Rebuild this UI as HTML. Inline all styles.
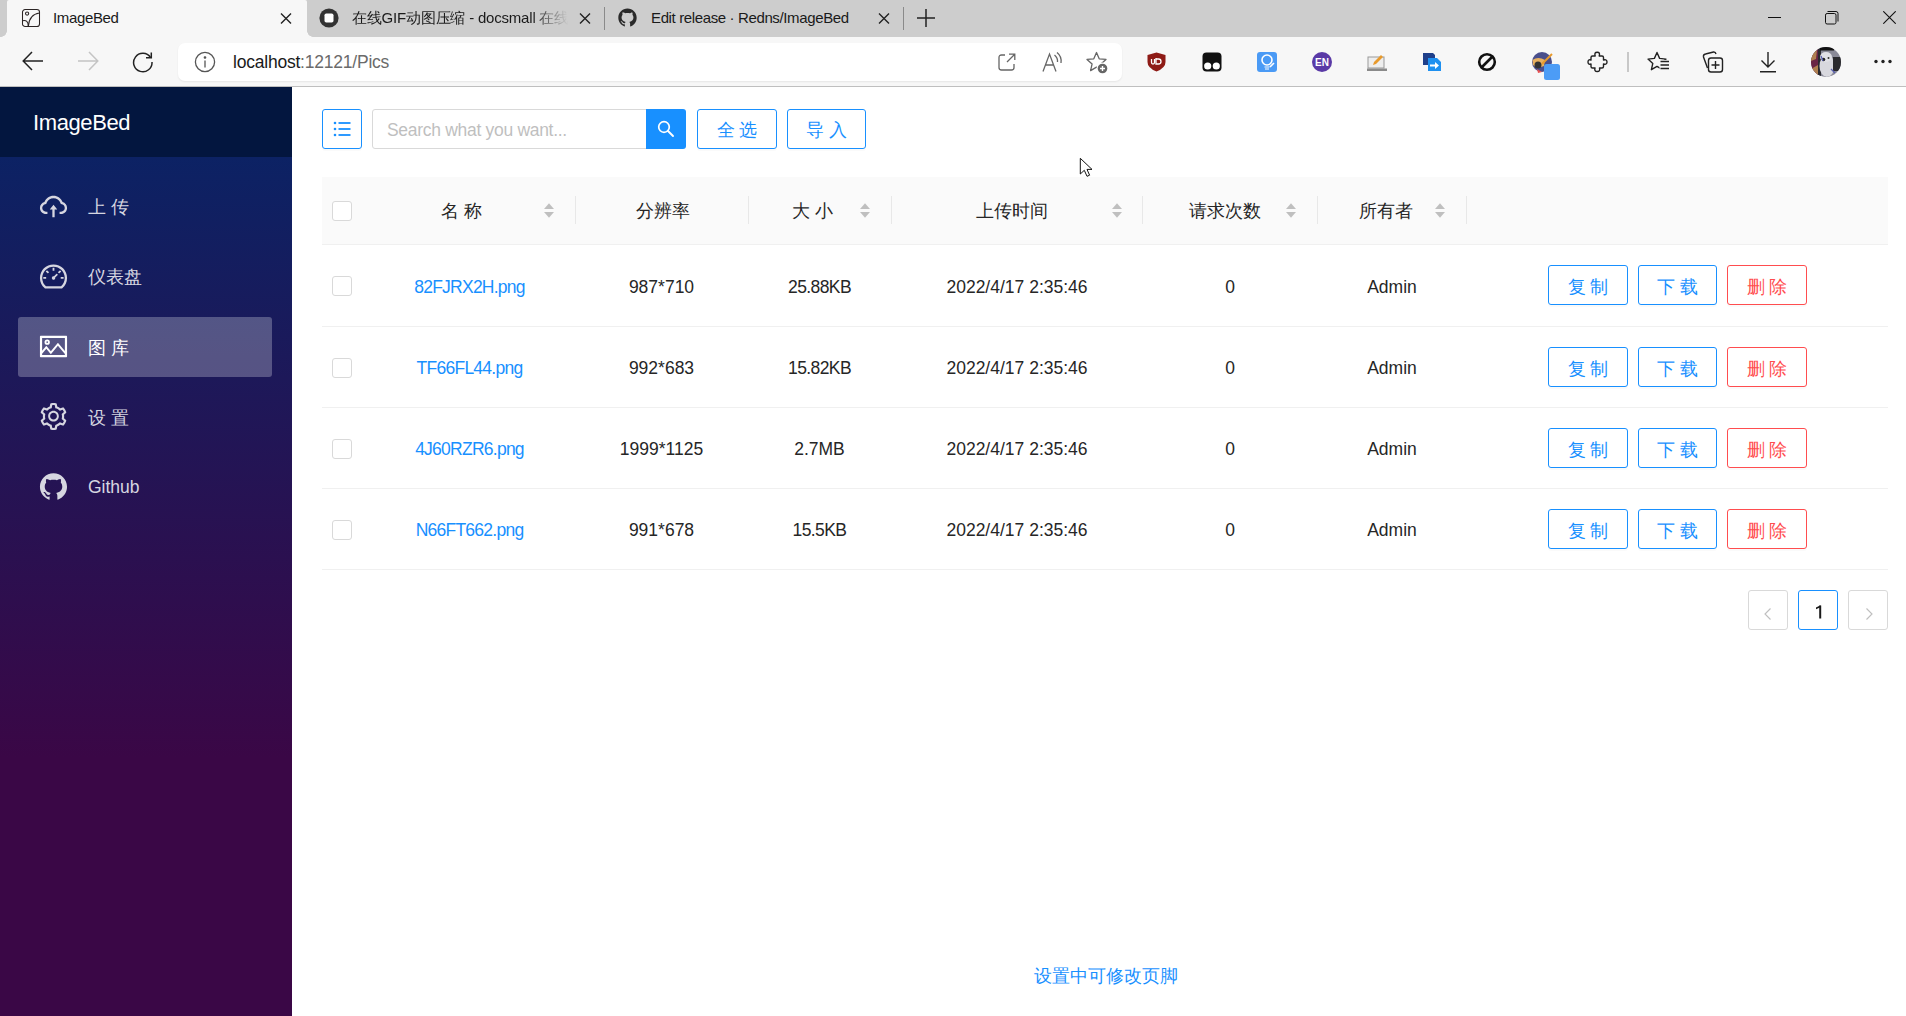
<!DOCTYPE html>
<html><head><meta charset="utf-8">
<style>
*{box-sizing:border-box;margin:0;padding:0}
html,body{width:1906px;height:1016px;overflow:hidden;background:#fff;font-family:"Liberation Sans",sans-serif;position:relative}
.abs{position:absolute}
/* chrome */
#tabstrip{position:absolute;left:0;top:0;width:1906px;height:37px;background:#cdcdcd}
#toolbar{position:absolute;left:0;top:37px;width:1906px;height:50px;background:#f7f7f7;border-bottom:1px solid #bfbfbf}
.tab-active{position:absolute;left:7px;top:0;width:300px;height:37px;background:#f7f7f7;border-radius:2px 2px 0 0}
.tabtxt{position:absolute;top:9px;font-size:15px;color:#1a1a1a;white-space:nowrap;line-height:18px}
.tsep{position:absolute;top:7px;width:1px;height:23px;background:#8a8a8a}
#addr{position:absolute;left:178px;top:43px;width:944px;height:38px;background:#fff;border-radius:7px;box-shadow:0 1px 2px rgba(0,0,0,0.07)}
/* page */
#side{position:absolute;left:0;top:157px;width:292px;height:859px;background:linear-gradient(#0c2264 0px,#3a0746 600px,#3a0746 100%)}
#sidehead{position:absolute;left:0;top:87px;width:292px;height:70px;background:#03163f}
#main{position:absolute;left:292px;top:87px;width:1614px;height:929px;background:#fff}
.menu{position:absolute;left:0;width:292px;height:60px;color:#d6d6e0;font-size:17.5px}
.menu .ic{position:absolute;left:39px;top:16px;width:28px;height:28px}
.menu .tx{position:absolute;left:88px;top:19px;line-height:22px;white-space:nowrap}
.btn{position:absolute;height:40px;border:1px solid #1890ff;border-radius:3px;box-shadow:0 2px 0 rgba(0,0,0,0.02);color:#1890ff;background:#fff;font-size:17.5px;text-align:center;line-height:40px;white-space:nowrap}
.btn.red{border-color:#ff4d4f;color:#ff4d4f}
.th{position:absolute;top:200px;font-size:17.5px;color:#262626;white-space:nowrap;line-height:22px}
.td{position:absolute;font-size:17.5px;color:#262626;white-space:nowrap;line-height:22px;text-align:center}
.link{color:#1890ff;letter-spacing:-0.75px}
.cb{position:absolute;width:20px;height:20px;border:1px solid #d9d9d9;border-radius:3px;background:#fff}
.vsep{position:absolute;top:196px;width:1px;height:28px;background:#e8e8e8}
.rowline{position:absolute;left:322px;width:1566px;height:1px;background:#f0f0f0}
.sorter{position:absolute;top:203px;width:10px;height:15px}
.pg{position:absolute;top:590px;width:40px;height:40px;border:1px solid #d9d9d9;border-radius:3px;background:#fff}
</style></head><body>
<!-- TAB STRIP -->
<div id="tabstrip"></div>
<div class="tab-active"></div>
<!-- concave bottom corners of active tab -->
<div class="abs" style="left:1px;top:31px;width:6px;height:6px;background:radial-gradient(circle at 0 0,#cdcdcd 5.5px,#f7f7f7 6px)"></div>
<div class="abs" style="left:307px;top:31px;width:6px;height:6px;background:radial-gradient(circle at 100% 0,#cdcdcd 5.5px,#f7f7f7 6px)"></div>
<!-- tab 1 -->
<svg class="abs" style="left:21px;top:8px" width="20" height="20" viewBox="0 0 20 20" fill="none" stroke="#2b2424" stroke-width="1.05"><rect x="1.5" y="1.5" width="17" height="17" rx="2.6"/><circle cx="6.1" cy="5.6" r="1.6"/><path d="M1.5 12.7 Q7.2 11.3 7.3 18.5"/><path d="M7.3 18.5 Q8.2 6.3 18.5 5.0"/></svg>
<div class="tabtxt" style="left:53px;letter-spacing:-0.35px">ImageBed</div>
<svg class="abs" style="left:280px;top:13px" width="12" height="11" viewBox="0 0 12 11" stroke="#222" stroke-width="1.4"><path d="M1 0.5 L11 10.5 M11 0.5 L1 10.5"/></svg>
<!-- tab 2 -->
<svg class="abs" style="left:319px;top:8px" width="20" height="20" viewBox="0 0 20 20"><circle cx="10" cy="10" r="9.6" fill="#333"/><rect x="5.5" y="5.5" width="9" height="9" rx="1.8" fill="#fff"/></svg>
<div class="tabtxt" style="left:352px;width:216px;overflow:hidden;letter-spacing:-0.2px;-webkit-mask-image:linear-gradient(90deg,#000 180px,transparent 216px)">在线GIF动图压缩 - docsmall 在线</div>
<svg class="abs" style="left:579px;top:13px" width="12" height="11" viewBox="0 0 12 11" stroke="#222" stroke-width="1.4"><path d="M1 0.5 L11 10.5 M11 0.5 L1 10.5"/></svg>
<div class="tsep" style="left:604px"></div>
<!-- tab 3 -->
<svg class="abs" style="left:617px;top:7px" width="21" height="21" viewBox="0 0 1024 1024" fill="#2a2a2a"><path d="M511.6 76.3C264.3 76.2 64 276.4 64 523.5 64 718.9 189.3 885 363.8 946c23.5 5.9 19.9-10.8 19.9-22.2v-77.5c-135.7 15.9-141.2-73.9-150.3-88.9C215 726 171.5 718 184.5 703c30.9-15.9 62.4 4 98.9 57.9 26.4 39.1 77.9 32.5 104 26 5.7-23.5 17.9-44.5 34.7-60.8-140.6-25.2-199.2-111-199.2-213 0-49.5 16.3-95 48.3-131.7-20.4-60.5 1.9-112.3 4.9-120 58.1-5.2 118.5 41.6 123.2 45.3 33-8.9 70.7-13.6 112.9-13.6 42.4 0 80.2 4.9 113.5 13.9 11.3-8.6 67.3-48.8 121.3-43.9 2.9 7.7 24.7 58.3 5.5 118 32.4 36.8 48.9 82.7 48.9 132.3 0 102.2-59 188.1-200 212.9a127.5 127.5 0 0138.1 91v112.5c.8 9 0 17.9 15 17.9 177.1-59.7 304.6-227 304.6-424.1 0-247.2-200.4-447.3-447.5-447.3z"/></svg>
<div class="tabtxt" style="left:651px;letter-spacing:-0.37px">Edit release · Redns/ImageBed</div>
<svg class="abs" style="left:878px;top:13px" width="12" height="11" viewBox="0 0 12 11" stroke="#222" stroke-width="1.4"><path d="M1 0.5 L11 10.5 M11 0.5 L1 10.5"/></svg>
<div class="tsep" style="left:903px"></div>
<svg class="abs" style="left:917px;top:9px" width="18" height="18" viewBox="0 0 18 18" stroke="#222" stroke-width="1.5"><path d="M9 0 V18 M0 9 H18"/></svg>
<!-- window controls -->
<div class="abs" style="left:1768px;top:17px;width:13px;height:1px;background:#111"></div>
<svg class="abs" style="left:1823px;top:9px" width="17" height="17" viewBox="0 0 17 17" fill="none" stroke="#111" stroke-width="1"><rect x="2.5" y="4.5" width="10.5" height="10.5" rx="1.6"/><path d="M4.5 2.5 H13 Q15 2.5 15 4.5 V12.5"/></svg>
<svg class="abs" style="left:1883px;top:11px" width="13" height="13" viewBox="0 0 13 13" stroke="#111" stroke-width="1.1"><path d="M0.3 0.3 L12.7 12.7 M12.7 0.3 L0.3 12.7"/></svg>

<div id="toolbar"></div>
<div id="addr"></div>
<!-- nav buttons -->
<svg class="abs" style="left:22px;top:51px" width="22" height="20" viewBox="0 0 22 20" fill="none" stroke="#222" stroke-width="1.5"><path d="M10 1 L1.2 10 L10 19 M1.5 10 H21"/></svg>
<svg class="abs" style="left:77px;top:51px" width="22" height="20" viewBox="0 0 22 20" fill="none" stroke="#c4c4c4" stroke-width="1.5"><path d="M12 1 L20.8 10 L12 19 M20.5 10 H1"/></svg>
<svg class="abs" style="left:132px;top:51px" width="22" height="22" viewBox="0 0 22 22" fill="none" stroke="#222" stroke-width="1.5"><path d="M18.5 6.5 A9.2 9.2 0 1 0 20 11"/><path d="M19.3 1.5 V6.8 H14"/></svg>
<!-- address -->
<svg class="abs" style="left:194px;top:51px" width="22" height="22" viewBox="0 0 22 22" fill="none" stroke="#555" stroke-width="1.3"><circle cx="11" cy="11" r="9.6"/><path d="M11 9.5 V16.5"/><circle cx="11" cy="6.5" r="0.7" fill="#555"/></svg>
<div class="abs" style="left:233px;top:52px;font-size:17.5px;line-height:20px;letter-spacing:-0.22px;white-space:nowrap;color:#1a1a1a">localhost<span style="color:#6b6b6b">:12121/Pics</span></div>
<svg class="abs" style="left:998px;top:53px" width="18" height="18" viewBox="0 0 18 18" fill="none" stroke="#666" stroke-width="1.3"><path d="M7 2 H3.5 Q1 2 1 4.5 V14.5 Q1 17 3.5 17 H13.5 Q16 17 16 14.5 V11"/><path d="M9 9 L16.5 1.5 M11 1.2 H16.8 V7"/></svg>
<svg class="abs" style="left:1042px;top:51px" width="22" height="22" viewBox="0 0 22 22" fill="none" stroke="#666" stroke-width="1.3"><path d="M1 20.5 L7.5 3 L14 20.5 M3.5 14 H11.5"/><path d="M12.5 4 Q16 7 15.5 11 M15 1.5 Q20 5.5 19 12"/></svg>
<svg class="abs" style="left:1086px;top:51px" width="24" height="24" viewBox="0 0 24 24"><path d="M10.5 1.5 L13.2 7.8 L20.0 8.4 L14.9 12.9 L16.4 19.6 L10.5 16.1 L4.6 19.6 L6.1 12.9 L1.0 8.4 L7.8 7.8 Z" fill="none" stroke="#666" stroke-width="1.3" stroke-linejoin="round"/><circle cx="16.5" cy="17.5" r="6" fill="#fff"/><circle cx="16.5" cy="17.5" r="4.8" fill="#666"/><path d="M16.5 15 V20 M14 17.5 H19" stroke="#fff" stroke-width="1.4"/></svg>
<!-- extensions -->
<svg class="abs" style="left:1147px;top:52px" width="19" height="20" viewBox="0 0 19 20"><path d="M9.5 0.5 L18.5 3 V10 Q18.5 16 9.5 19.5 Q0.5 16 0.5 10 V3 Z" fill="#8e1b16"/><path d="M4.5 7 V10.5 Q4.5 12 6 12 Q7.5 12 7.5 10.5 V7 M9 6 V12 H11.5 Q14 12 14 9.5 Q14 7 11.5 7 H9" fill="none" stroke="#fff" stroke-width="1.3"/></svg>
<svg class="abs" style="left:1202px;top:52px" width="20" height="20" viewBox="0 0 20 20"><rect x="0.5" y="0.5" width="19" height="19" rx="4" fill="#111"/><circle cx="5.7" cy="14" r="3.6" fill="#fff"/><circle cx="14.3" cy="14" r="3.6" fill="#fff"/></svg>
<svg class="abs" style="left:1257px;top:52px" width="20" height="20" viewBox="0 0 20 20"><rect x="0" y="0" width="20" height="20" rx="3" fill="#4a9af5"/><circle cx="10" cy="8" r="5" fill="none" stroke="#fff" stroke-width="1.6"/><path d="M7.5 15 H12.5 M8 17 H12" stroke="#fff" stroke-width="1"/><path d="M13 15 L17 11" stroke="#fff" stroke-width="1.6"/></svg>
<svg class="abs" style="left:1312px;top:52px" width="20" height="20" viewBox="0 0 20 20"><circle cx="10" cy="10" r="10" fill="#5a3aa6"/><text x="10" y="14" text-anchor="middle" font-family="Liberation Sans" font-weight="bold" font-size="10" fill="#fff">EN</text></svg>
<svg class="abs" style="left:1367px;top:52px" width="20" height="20" viewBox="0 0 20 20"><rect x="1" y="5" width="16" height="11" fill="#eee" stroke="#999" stroke-width="1"/><rect x="0" y="16.5" width="20" height="2.5" fill="#8a8a8a"/><path d="M6 13 L7 10 L14 3 L16 5 L9 12 Z" fill="#e89a2c"/></svg>
<svg class="abs" style="left:1422px;top:52px" width="20" height="20" viewBox="0 0 20 20"><path d="M1 1 H11 L13 3 V13 H1 Z" fill="#1f3f8a"/><path d="M6 6 H15 L19 10 V19 H6 Z" fill="#1e90f0"/><path d="M8 12.5 H13 V10 L17 13.5 L13 17 V14.5 H8 Z" fill="#fff"/></svg>
<svg class="abs" style="left:1477px;top:52px" width="20" height="20" viewBox="0 0 20 20" fill="none" stroke="#111" stroke-width="2.6"><circle cx="10" cy="10" r="7.8"/><path d="M15.5 4.5 L4.5 15.5"/></svg>
<svg class="abs" style="left:1532px;top:52px" width="29" height="29" viewBox="0 0 29 29"><circle cx="10" cy="10" r="10" fill="#4a4f8c"/><path d="M0.5 8 Q6 4 13 8 L12 14 Q5 17 1 13 Z" fill="#e8b060"/><circle cx="6" cy="13" r="3.5" fill="#333"/><path d="M10 12 L20 2" stroke="#e89a2c" stroke-width="2"/><path d="M5 17 L10 20 L6 21 Z" fill="#e85050"/><rect x="12" y="12" width="16" height="16" rx="2.5" fill="#4c9cf6"/></svg>
<svg class="abs" style="left:1587px;top:51px" width="21" height="22" viewBox="0 0 21 22" fill="none" stroke="#222" stroke-width="1.4" stroke-linejoin="round"><path d="M5.5 5 H8.2 Q7 1.2 10.2 1.2 Q13.4 1.2 12.2 5 H15 Q16.5 5 16.5 6.5 V9 Q20 8 20 11 Q20 14 16.5 13 V15.5 Q16.5 17 15 17 H12.5 Q13.5 20.5 10.2 20.5 Q7 20.5 8 17 H5.5 Q4 17 4 15.5 V13 Q1 14 1 11 Q1 8 4 9 V6.5 Q4 5 5.5 5 Z"/></svg>
<div class="abs" style="left:1627px;top:52px;width:2px;height:20px;background:#c8c8c8"></div>
<svg class="abs" style="left:1647px;top:51px" width="23" height="21" viewBox="0 0 23 21"><path d="M10.0 1.5 L12.6 7.4 L19.0 8.1 L14.2 12.4 L15.6 18.7 L10.0 15.4 L4.4 18.7 L5.8 12.4 L1.0 8.1 L7.4 7.4 Z" fill="none" stroke="#222" stroke-width="1.4" stroke-linejoin="round"/><rect x="12.5" y="9" width="11" height="11" fill="#f7f7f7"/><path d="M13.5 10.5 H22 M13.5 14 H22 M13.5 17.5 H22" stroke="#222" stroke-width="1.4"/></svg>
<svg class="abs" style="left:1702px;top:51px" width="22" height="22" viewBox="0 0 22 22" fill="none" stroke="#222" stroke-width="1.4"><path d="M5.5 17 L1.5 6 Q1 3.5 3.5 3 L11.5 1 Q13.5 0.8 14 3"/><rect x="6.5" y="7" width="14" height="14" rx="2.5"/><path d="M13.5 10 V18 M9.5 14 H17.5"/></svg>
<svg class="abs" style="left:1759px;top:51px" width="18" height="22" viewBox="0 0 18 22" fill="none" stroke="#222" stroke-width="1.4"><path d="M9 1 V16 M2.5 9.5 L9 16 L15.5 9.5 M1 20.8 H17"/></svg>
<svg class="abs" style="left:1811px;top:47px" width="30" height="30" viewBox="0 0 30 30"><defs><clipPath id="avc"><circle cx="15" cy="15" r="15"/></clipPath></defs><g clip-path="url(#avc)"><rect width="30" height="30" fill="#8a8a98"/><rect x="0" y="0" width="8" height="30" fill="#6a2545"/><path d="M0 5 L6 3 L5 12 L0 14Z M0 22 L7 18 L8 30 L0 30Z" fill="#b08050"/><rect x="7" y="0" width="3" height="30" fill="#2a2a30"/><ellipse cx="16" cy="19" rx="7.5" ry="11" fill="#d8d8de"/><ellipse cx="15" cy="10" rx="6" ry="5" fill="#e0e0e6"/><rect x="22" y="10" width="8" height="14" fill="#2a2a2e"/><rect x="9" y="0" width="14" height="3.5" fill="#111"/><circle cx="12.5" cy="12.5" r="1.8" fill="#222"/><circle cx="17.5" cy="11" r="1" fill="#333"/><path d="M10 9 L12 14 M24 26 L20 22" stroke="#5a60b0" stroke-width="1.3"/></g></svg>
<svg class="abs" style="left:1874px;top:59px" width="18" height="5" viewBox="0 0 18 5" fill="#222"><circle cx="2" cy="2.5" r="1.7"/><circle cx="9" cy="2.5" r="1.7"/><circle cx="16" cy="2.5" r="1.7"/></svg>

<!-- SIDEBAR -->
<div id="side"></div>
<div id="sidehead"></div>
<div class="abs" style="left:33px;top:110px;font-size:22px;letter-spacing:-0.4px;color:#fff;line-height:26px">ImageBed</div>

<div class="abs" style="left:18px;top:317px;width:254px;height:60px;background:rgba(255,255,255,0.26);border-radius:3px"></div>
<svg class="abs" style="left:38px;top:191px" width="31" height="31" viewBox="0 0 1024 1024" fill="#d6d6e0"><path d="M518.3 459a8 8 0 00-12.6 0l-112 141.7a7.98 7.98 0 006.3 12.9h73.9V856c0 4.4 3.6 8 8 8h60c4.4 0 8-3.6 8-8V613.7H624c6.7 0 10.4-7.7 6.3-12.9L518.3 459z"/><path d="M811.4 366.7C765.6 245.9 648.9 160 512.2 160S258.8 245.8 213 366.6C127.3 389.1 64 467.2 64 560c0 110.5 89.5 200 199.9 200H304c4.4 0 8-3.6 8-8v-60c0-4.4-3.6-8-8-8h-40.1c-33.7 0-65.4-13.4-89-37.7-23.5-24.2-36-56.8-34.9-90.6.9-26.4 9.9-51.2 26.2-72.1 16.7-21.3 40.1-36.8 66.1-43.7l37.900-9.900 13.900-36.600c8.6-22.8 20.6-44.1 35.7-63.4a245.6 245.6 0 0152.4-49.9c41.1-28.9 89.5-44.2 140-44.2s98.9 15.3 140 44.2c19.9 14 37.5 30.8 52.4 49.9 15.1 19.3 27.1 40.7 35.7 63.4l13.8 36.5 37.8 10C846.1 454.5 884 503.8 884 560c0 33.1-12.9 64.3-36.3 87.7a123.07 123.07 0 01-87.6 36.3H720c-4.4 0-8 3.6-8 8v60c0 4.4 3.6 8 8 8h40.1C870.5 760 960 670.5 960 560c0-92.7-63.1-170.7-148.600-193.300z"/></svg>
<div class="abs" style="left:88px;top:196px;font-size:17.5px;line-height:22px;color:#d6d6e0;white-space:nowrap">上 传</div>
<svg class="abs" style="left:38px;top:261px" width="31" height="31" viewBox="0 0 1024 1024" fill="#d6d6e0"><path d="M924.8 385.6a446.7 446.7 0 00-96-142.4 446.7 446.7 0 00-142.4-96C631.1 123.8 572.5 112 512 112s-119.1 11.8-174.4 35.2a446.7 446.7 0 00-142.4 96 446.7 446.7 0 00-96 142.4C75.8 440.9 64 499.5 64 560c0 132.7 58.3 257.7 159.9 343.1l1.7 1.4c5.8 4.8 13.1 7.5 20.6 7.5h531.7c7.5 0 14.8-2.700 20.600-7.500l1.7-1.4C901.7 817.7 960 692.7 960 560c0-60.5-11.9-119.1-35.2-174.4zM761.4 836H262.6A371.12 371.12 0 01140 560c0-99.4 38.7-192.8 109-263 70.3-70.3 163.7-109 263-109 99.4 0 192.8 38.7 263 109 70.3 70.3 109 163.7 109 263 0 105.6-44.5 205.5-122.6 276zM623.5 421.5a8.03 8.03 0 00-11.3 0L527.7 506c-18.7-5-39.4-.2-54.1 14.5a55.95 55.95 0 000 79.2 55.95 55.95 0 0079.2 0 55.87 55.87 0 0014.5-54.1l84.5-84.5c3.1-3.1 3.1-8.2 0-11.3l-28.3-28.3zM490 320h44c4.4 0 8-3.6 8-8v-80c0-4.4-3.6-8-8-8h-44c-4.4 0-8 3.6-8 8v80c0 4.4 3.6 8 8 8zm260 218v44c0 4.4 3.6 8 8 8h80c4.4 0 8-3.6 8-8v-44c0-4.4-3.6-8-8-8h-80c-4.4 0-8 3.6-8 8zm12.7-197.2l-31.1-31.1a8.03 8.03 0 00-11.3 0l-56.6 56.6a8.03 8.03 0 000 11.3l31.1 31.1c3.1 3.1 8.2 3.1 11.3 0l56.6-56.6c3.1-3.1 3.1-8.2 0-11.3zm-458.6-31.1a8.03 8.03 0 00-11.3 0l-31.1 31.1a8.03 8.03 0 000 11.3l56.6 56.6c3.1 3.1 8.2 3.1 11.3 0l31.1-31.1c3.1-3.1 3.1-8.2 0-11.3l-56.6-56.6zM262 530h-80c-4.4 0-8 3.6-8 8v44c0 4.4 3.6 8 8 8h80c4.4 0 8-3.6 8-8v-44c0-4.4-3.6-8-8-8z"/></svg>
<div class="abs" style="left:88px;top:266px;font-size:17.5px;line-height:22px;color:#d6d6e0;white-space:nowrap">仪表盘</div>
<svg class="abs" style="left:38px;top:331px" width="31" height="31" viewBox="0 0 1024 1024" fill="#fff"><path d="M928 160H96c-17.7 0-32 14.3-32 32v640c0 17.7 14.3 32 32 32h832c17.7 0 32-14.3 32-32V192c0-17.7-14.3-32-32-32zm-40 632H136v-39.9l138.5-164.3 150.1 178L658.1 489 888 761.6V792zm0-129.8L664.2 396.8c-3.2-3.8-9-3.8-12.2 0L424.6 666.4l-144-170.7c-3.2-3.8-9-3.8-12.2 0L136 652.7V232h752v430.2zM304 456a88 88 0 100-176 88 88 0 000 176zm0-116c15.5 0 28 12.5 28 28s-12.5 28-28 28-28-12.5-28-28 12.5-28 28-28z"/></svg>
<div class="abs" style="left:88px;top:337px;font-size:17.5px;line-height:22px;color:#fff;white-space:nowrap">图 库</div>
<svg class="abs" style="left:38px;top:401px" width="31" height="31" viewBox="0 0 1024 1024" fill="#d6d6e0"><path d="M924.8 625.7l-65.5-56c3.1-19 4.7-38.4 4.7-57.8s-1.6-38.8-4.7-57.8l65.5-56a32.03 32.03 0 009.3-35.2l-.9-2.6a443.74 443.74 0 00-79.7-137.9l-1.8-2.1a32.12 32.12 0 00-35.1-9.5l-81.3 28.9c-30-24.6-63.5-44-99.7-57.6l-15.7-85a32.05 32.05 0 00-25.8-25.7l-2.7-.5c-52.1-9.4-106.9-9.4-159 0l-2.7.5a32.05 32.05 0 00-25.8 25.7l-15.8 85.4a351.86 351.86 0 00-99 57.4l-81.9-29.1a32 32 0 00-35.1 9.5l-1.8 2.1a446.02 446.02 0 00-79.7 137.9l-.9 2.6c-4.5 12.5-.8 26.5 9.3 35.2l66.3 56.6c-3.1 18.8-4.6 38-4.6 57.1 0 19.2 1.5 38.4 4.6 57.1L99 625.5a32.03 32.03 0 00-9.3 35.2l.9 2.6c18.1 50.4 44.9 96.9 79.7 137.9l1.8 2.1a32.12 32.12 0 0035.1 9.5l81.9-29.1c29.8 24.5 63.1 43.9 99 57.4l15.8 85.4a32.05 32.05 0 0025.8 25.7l2.7.5a449.4 449.4 0 00159 0l2.7-.5a32.05 32.05 0 0025.8-25.7l15.7-85a350 350 0 0099.7-57.6l81.3 28.9a32 32 0 0035.1-9.5l1.8-2.1c34.8-41.1 61.6-87.5 79.7-137.9l.9-2.6c4.5-12.3.8-26.3-9.3-35zM788.3 465.9c2.5 15.1 3.8 30.6 3.8 46.1s-1.3 31-3.8 46.1l-6.6 40.1 74.7 63.9a370.03 370.03 0 01-42.6 73.6L721 702.8l-31.4 25.8c-23.9 19.6-50.5 35-79.3 45.8l-38.1 14.3-17.9 97a377.5 377.5 0 01-85 0l-17.9-97.2-37.8-14.5c-28.5-10.8-55-26.2-78.7-45.7l-31.4-25.9-93.4 33.2c-17-22.9-31.2-47.6-42.6-73.6l75.5-64.5-6.5-40c-2.4-14.9-3.7-30.3-3.7-45.5 0-15.3 1.2-30.6 3.7-45.5l6.5-40-75.5-64.5c11.3-26.1 25.6-50.7 42.6-73.6l93.4 33.2 31.4-25.9c23.7-19.5 50.2-34.9 78.7-45.7l37.9-14.3 17.9-97.2c28.1-3.2 56.8-3.2 85 0l17.9 97 38.1 14.3c28.7 10.8 55.4 26.2 79.3 45.8l31.4 25.8 92.8-32.9c17 22.9 31.2 47.6 42.6 73.6L781.8 426l6.5 39.9zM512 326c-97.2 0-176 78.8-176 176s78.8 176 176 176 176-78.8 176-176-78.8-176-176-176zm79.2 255.2A111.6 111.6 0 01512 614c-29.9 0-58-11.7-79.2-32.8A111.6 111.6 0 01400 502c0-29.9 11.7-58 32.8-79.2C454 401.600 482.100 390 512 390c29.9 0 58 11.6 79.2 32.8A111.6 111.6 0 01624 502c0 29.9-11.7 58-32.8 79.2z"/></svg>
<div class="abs" style="left:88px;top:407px;font-size:17.5px;line-height:22px;color:#d6d6e0;white-space:nowrap">设 置</div>
<svg class="abs" style="left:38px;top:471px" width="31" height="31" viewBox="0 0 1024 1024" fill="#d6d6e0"><path d="M511.6 76.3C264.3 76.2 64 276.4 64 523.5 64 718.9 189.3 885 363.8 946c23.5 5.9 19.9-10.8 19.9-22.2v-77.5c-135.7 15.9-141.2-73.9-150.3-88.9C215 726 171.5 718 184.5 703c30.9-15.9 62.4 4 98.9 57.9 26.4 39.1 77.9 32.5 104 26 5.7-23.5 17.9-44.5 34.7-60.8-140.6-25.2-199.2-111-199.2-213 0-49.5 16.300-95 48.300-131.700-20.4-60.5 1.9-112.3 4.9-120 58.1-5.2 118.5 41.6 123.2 45.3 33-8.9 70.7-13.6 112.9-13.6 42.4 0 80.2 4.9 113.5 13.9 11.3-8.6 67.3-48.8 121.3-43.9 2.9 7.7 24.7 58.3 5.5 118 32.4 36.8 48.9 82.7 48.9 132.3 0 102.2-59 188.1-200 212.9a127.5 127.5 0 0138.1 91v112.5c.8 9 0 17.9 15 17.9 177.1-59.7 304.6-227 304.6-424.1 0-247.2-200.4-447.3-447.5-447.3z"/></svg>
<div class="abs" style="left:88px;top:476px;font-size:17.5px;line-height:22px;color:#d6d6e0;white-space:nowrap">Github</div>

<!-- MAIN -->
<div id="main"></div>
<!-- toolbar row -->
<div class="btn" style="left:322px;top:109px;width:40px;"><svg width="18" height="18" viewBox="0 0 18 18" style="position:absolute;left:10px;top:10px"><g fill="#1890ff"><circle cx="2" cy="3" r="1.3"/><circle cx="2" cy="9" r="1.3"/><circle cx="2" cy="15" r="1.3"/><rect x="5.5" y="2.1" width="12" height="1.8"/><rect x="5.5" y="8.1" width="12" height="1.8"/><rect x="5.5" y="14.1" width="12" height="1.8"/></g></svg></div>
<div class="abs" style="left:372px;top:109px;width:276px;height:40px;border:1px solid #d9d9d9;border-radius:3px 0 0 3px;background:#fff"></div>
<div class="abs" style="left:387px;top:119px;font-size:17.5px;color:#bfbfbf;line-height:22px;letter-spacing:-0.3px;white-space:nowrap">Search what you want...</div>
<div class="abs" style="left:646px;top:109px;width:40px;height:40px;background:#1890ff;border-radius:0 3px 3px 0"><svg width="18" height="18" viewBox="0 0 18 18" style="position:absolute;left:11px;top:11px"><circle cx="7" cy="7" r="5.3" fill="none" stroke="#fff" stroke-width="1.7"/><line x1="11" y1="11" x2="16" y2="16" stroke="#fff" stroke-width="1.9" stroke-linecap="round"/></svg></div>
<div class="btn" style="left:697px;top:109px;width:80px;">全 选</div>
<div class="btn" style="left:787px;top:109px;width:79px;">导 入</div>

<!-- table header -->
<div class="abs" style="left:322px;top:177px;width:1566px;height:68px;background:#fafafa;border-bottom:1px solid #f0f0f0"></div>
<div class="cb" style="left:332px;top:201px"></div>
<div class="th" style="left:441px">名 称</div>
<div class="th" style="left:636px">分辨率</div>
<div class="th" style="left:792px">大 小</div>
<div class="th" style="left:976px">上传时间</div>
<div class="th" style="left:1189px">请求次数</div>
<div class="th" style="left:1359px">所有者</div>
<div class="vsep" style="left:575px"></div>
<div class="vsep" style="left:748px"></div>
<div class="vsep" style="left:891px"></div>
<div class="vsep" style="left:1142px"></div>
<div class="vsep" style="left:1317px"></div>
<div class="vsep" style="left:1466px"></div>
<svg class="sorter" style="left:544px" viewBox="0 0 10 15"><path d="M5 0.3 L10 6 L0 6Z" fill="#bfbfbf"/><path d="M5 14.7 L10 9 L0 9Z" fill="#bfbfbf"/></svg>
<svg class="sorter" style="left:860px" viewBox="0 0 10 15"><path d="M5 0.3 L10 6 L0 6Z" fill="#bfbfbf"/><path d="M5 14.7 L10 9 L0 9Z" fill="#bfbfbf"/></svg>
<svg class="sorter" style="left:1112px" viewBox="0 0 10 15"><path d="M5 0.3 L10 6 L0 6Z" fill="#bfbfbf"/><path d="M5 14.7 L10 9 L0 9Z" fill="#bfbfbf"/></svg>
<svg class="sorter" style="left:1286px" viewBox="0 0 10 15"><path d="M5 0.3 L10 6 L0 6Z" fill="#bfbfbf"/><path d="M5 14.7 L10 9 L0 9Z" fill="#bfbfbf"/></svg>
<svg class="sorter" style="left:1435px" viewBox="0 0 10 15"><path d="M5 0.3 L10 6 L0 6Z" fill="#bfbfbf"/><path d="M5 14.7 L10 9 L0 9Z" fill="#bfbfbf"/></svg>

<div class="rowline" style="top:326px"></div>
<div class="cb" style="left:332px;top:276px"></div>
<div class="td link" style="left:364px;width:211px;top:276px">82FJRX2H.png</div>
<div class="td" style="left:575px;width:173px;top:276px">987*710</div>
<div class="td" style="left:748px;width:143px;top:276px;letter-spacing:-0.6px">25.88KB</div>
<div class="td" style="left:891px;width:252px;top:276px">2022/4/17 2:35:46</div>
<div class="td" style="left:1143px;width:174px;top:276px">0</div>
<div class="td" style="left:1317px;width:150px;top:276px">Admin</div>
<div class="btn" style="left:1548px;top:265px;width:80px;line-height:42px">复 制</div>
<div class="btn" style="left:1638px;top:265px;width:79px;line-height:42px">下 载</div>
<div class="btn red" style="left:1727px;top:265px;width:80px;line-height:42px">删 除</div>
<div class="rowline" style="top:407px"></div>
<div class="cb" style="left:332px;top:358px"></div>
<div class="td link" style="left:364px;width:211px;top:357px">TF66FL44.png</div>
<div class="td" style="left:575px;width:173px;top:357px">992*683</div>
<div class="td" style="left:748px;width:143px;top:357px;letter-spacing:-0.6px">15.82KB</div>
<div class="td" style="left:891px;width:252px;top:357px">2022/4/17 2:35:46</div>
<div class="td" style="left:1143px;width:174px;top:357px">0</div>
<div class="td" style="left:1317px;width:150px;top:357px">Admin</div>
<div class="btn" style="left:1548px;top:347px;width:80px;line-height:42px">复 制</div>
<div class="btn" style="left:1638px;top:347px;width:79px;line-height:42px">下 载</div>
<div class="btn red" style="left:1727px;top:347px;width:80px;line-height:42px">删 除</div>
<div class="rowline" style="top:488px"></div>
<div class="cb" style="left:332px;top:439px"></div>
<div class="td link" style="left:364px;width:211px;top:438px">4J60RZR6.png</div>
<div class="td" style="left:575px;width:173px;top:438px">1999*1125</div>
<div class="td" style="left:748px;width:143px;top:438px">2.7MB</div>
<div class="td" style="left:891px;width:252px;top:438px">2022/4/17 2:35:46</div>
<div class="td" style="left:1143px;width:174px;top:438px">0</div>
<div class="td" style="left:1317px;width:150px;top:438px">Admin</div>
<div class="btn" style="left:1548px;top:428px;width:80px;line-height:42px">复 制</div>
<div class="btn" style="left:1638px;top:428px;width:79px;line-height:42px">下 载</div>
<div class="btn red" style="left:1727px;top:428px;width:80px;line-height:42px">删 除</div>
<div class="rowline" style="top:569px"></div>
<div class="cb" style="left:332px;top:520px"></div>
<div class="td link" style="left:364px;width:211px;top:519px">N66FT662.png</div>
<div class="td" style="left:575px;width:173px;top:519px">991*678</div>
<div class="td" style="left:748px;width:143px;top:519px;letter-spacing:-0.6px">15.5KB</div>
<div class="td" style="left:891px;width:252px;top:519px">2022/4/17 2:35:46</div>
<div class="td" style="left:1143px;width:174px;top:519px">0</div>
<div class="td" style="left:1317px;width:150px;top:519px">Admin</div>
<div class="btn" style="left:1548px;top:509px;width:80px;line-height:42px">复 制</div>
<div class="btn" style="left:1638px;top:509px;width:79px;line-height:42px">下 载</div>
<div class="btn red" style="left:1727px;top:509px;width:80px;line-height:42px">删 除</div>
<!-- pagination -->
<div class="pg" style="left:1748px"><svg width="12" height="14" viewBox="0 0 12 14" style="position:absolute;left:13px;top:16px"><path d="M8.5 1.5 L3 7 L8.5 12.5" fill="none" stroke="#bfbfbf" stroke-width="1.15"/></svg></div>
<div class="pg" style="left:1798px;border-color:#1890ff"><svg style="position:absolute;left:16px;top:14px" width="8" height="14" viewBox="0 0 8 14"><path d="M5.2 0.5 V13.5" stroke="#1a1a1a" stroke-width="2"/><path d="M5.5 0.3 L1 2.6 V4.3 L5.5 2.2 Z" fill="#1a1a1a"/></svg></div>
<div class="pg" style="left:1848px"><svg width="12" height="14" viewBox="0 0 12 14" style="position:absolute;left:14px;top:16px"><path d="M3.5 1.5 L9 7 L3.5 12.5" fill="none" stroke="#bfbfbf" stroke-width="1.15"/></svg></div>
<!-- footer -->
<div class="abs" style="left:1034px;top:965px;font-size:17.5px;color:#1890ff;line-height:22px;white-space:nowrap">设置中可修改页脚</div>

<svg class="abs" style="left:1079px;top:157px" width="14" height="21" viewBox="0 0 14 21"><path d="M1.3 1.3 L1.3 17 L5.3 13.3 L8 19.3 L10.6 18.2 L8 12.4 L13 12.4 Z" fill="#fff" stroke="#111" stroke-width="1" stroke-linejoin="miter"/></svg>
</body></html>
